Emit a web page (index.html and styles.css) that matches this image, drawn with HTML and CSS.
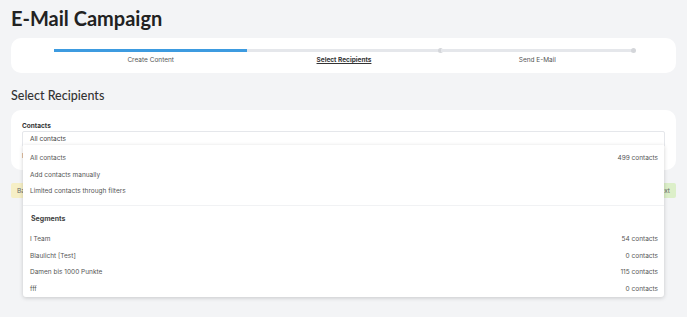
FILE: index.html
```html
<!DOCTYPE html>
<html lang="en">
<head>
  <meta charset="UTF-8" />
  <title>E-Mail Campaign</title>
  <link rel="stylesheet" href="styles.css">
</head>
<body>
  <h1 class="page-title">E-Mail Campaign</h1>

  <!-- Stepper -->
  <div class="card stepper-card">
    <div class="stepper">
      <div class="step done">
        <div class="step-bar"></div>
        <span class="step-label">Create Content</span>
      </div>
      <div class="step active">
        <div class="step-bar"><i class="dot"></i></div>
        <span class="step-label">Select Recipients</span>
      </div>
      <div class="step">
        <div class="step-bar"><i class="dot"></i></div>
        <span class="step-label">Send E-Mail</span>
      </div>
    </div>
  </div>

  <h2 class="section-title">Select Recipients</h2>

  <div class="card form-card">
    <label class="field-label">Contacts</label>
    <div class="select-wrap">
      <div class="select">All contacts</div>

      <!-- Open dropdown -->
      <div class="dropdown">
        <ul class="options">
          <li><span>All contacts</span><span class="count">499 contacts</span></li>
          <li><span>Add contacts manually</span></li>
          <li><span>Limited contacts through filters</span></li>
        </ul>
        <div class="group-title">Segments</div>
        <ul class="options segments">
          <li><span>I Team</span><span class="count">54 contacts</span></li>
          <li><span>Blaulicht [Test]</span><span class="count">0 contacts</span></li>
          <li><span>Damen bis 1000 Punkte</span><span class="count">115 contacts</span></li>
          <li><span>fff</span><span class="count">0 contacts</span></li>
        </ul>
      </div>
    </div>
    <p class="hint">In total all contacts will receive this e-mail.</p>
  </div>

  <div class="actions">
    <button class="btn btn-back">Back</button>
    <button class="btn btn-next">Next</button>
  </div>
</body>
</html>
```

FILE: styles.css
```css
html {
  height: 100%;
}

body {
  margin: 0;
  padding: 0 11px;
  min-height: 100%;
  box-sizing: border-box;
  background-color: #f3f4f6;
  font-family: "Inter", "Noto Sans", sans-serif;
  color: #333;
}

.page-title {
  margin: 0;
  padding-top: 5px;
  height: 33px;
  box-sizing: border-box;
  font-family: "Lato", sans-serif;
  font-size: 20px;
  line-height: 26px;
  font-weight: 700;
  color: #222;
}

.card {
  background-color: #ffffff;
  border-radius: 10px;
}

/* Stepper */
.stepper-card {
  margin-top: 5px;
  height: 35px;
  padding: 11px 42px 0 43px;
  box-sizing: border-box;
}

.stepper {
  display: flex;
}

.step {
  flex: 1;
  display: flex;
  flex-direction: column;
  align-items: center;
  gap: 4px;
}

.step-bar {
  width: 100%;
  height: 3px;
  background-color: #e5e7eb;
  position: relative;
}

.step.done .step-bar {
  background-color: #3d9be0;
}

.dot {
  position: absolute;
  right: -2.5px;
  top: -1px;
  width: 5px;
  height: 5px;
  border-radius: 50%;
  background-color: #d4d6da;
}

.step-label {
  font-size: 6.5px;
  line-height: 9px;
  color: #555;
}

.step.active .step-label {
  font-weight: 700;
  text-decoration: underline;
  color: #333;
}

.section-title {
  margin: 0;
  padding-top: 15px;
  height: 37px;
  box-sizing: border-box;
  font-family: "Lato", sans-serif;
  font-size: 12.5px;
  line-height: 16px;
  font-weight: 500;
  color: #333;
}

/* Form card */
.form-card {
  padding: 11px 11px 10px;
  height: 60px;
  box-sizing: border-box;
}

.field-label {
  display: block;
  font-size: 6.5px;
  line-height: 10px;
  font-weight: 700;
  color: #333;
}

.select-wrap {
  position: relative;
}

.select {
  height: 14px;
  border: 1px solid #e5e7eb;
  border-radius: 2px;
  padding: 0 7px;
  font-size: 6.5px;
  line-height: 14px;
  color: #444;
  background-color: #fff;
}

.hint {
  margin: 4px 0 0;
  font-size: 6.5px;
  line-height: 10px;
  color: #666;
}

.dropdown {
  position: absolute;
  top: 14px;
  left: 1px;
  right: 1px;
  background-color: #ffffff;
  box-shadow: 0 1px 4px rgba(0, 0, 0, 0.18);
  border-radius: 0 0 3px 3px;
  z-index: 10;
  padding-top: 5px;
}

.options {
  list-style: none;
  margin: 0;
  padding: 0;
}

.options li {
  display: flex;
  justify-content: space-between;
  align-items: center;
  height: 16.4px;
  padding: 0 6px 0 7px;
  font-size: 6.5px;
  color: #555;
}

.options:first-child {
  padding-bottom: 6px;
  border-bottom: 1px solid #f1f2f4;
}

.count {
  color: #555;
}

.group-title {
  padding: 8px 8px 0;
  height: 25px;
  box-sizing: border-box;
  font-size: 7px;
  font-weight: 700;
  color: #444;
  line-height: 10px;
}

/* Buttons */
.actions {
  display: flex;
  justify-content: space-between;
  margin-top: 13px;
}

.btn {
  height: 15px;
  border: none;
  border-radius: 2px;
  font-family: "Inter", sans-serif;
  font-size: 6.5px;
  padding: 0 6px;
  color: #666;
}

.btn-back {
  background-color: #f6efc6;
}

.btn-next {
  background-color: #dcefc9;
}
```
